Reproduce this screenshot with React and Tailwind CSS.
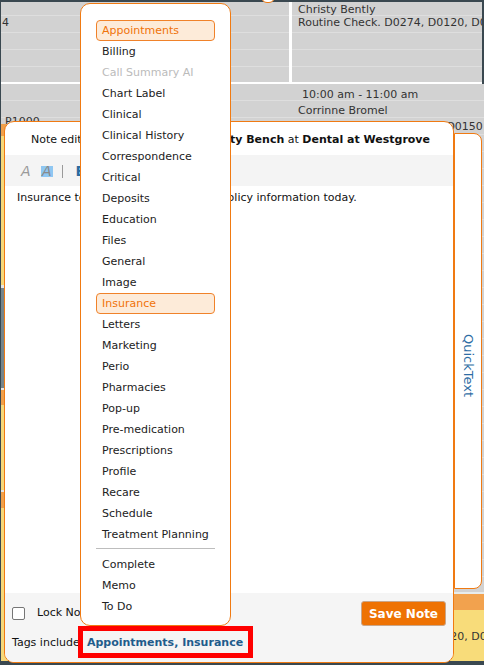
import React from 'react';

const tagOptions = [
  { label: 'Appointments', selected: true },
  { label: 'Billing' },
  { label: 'Call Summary AI', disabled: true },
  { label: 'Chart Label' },
  { label: 'Clinical' },
  { label: 'Clinical History' },
  { label: 'Correspondence' },
  { label: 'Critical' },
  { label: 'Deposits' },
  { label: 'Education' },
  { label: 'Files' },
  { label: 'General' },
  { label: 'Image' },
  { label: 'Insurance', selected: true },
  { label: 'Letters' },
  { label: 'Marketing' },
  { label: 'Perio' },
  { label: 'Pharmacies' },
  { label: 'Pop-up' },
  { label: 'Pre-medication' },
  { label: 'Prescriptions' },
  { label: 'Profile' },
  { label: 'Recare' },
  { label: 'Schedule' },
  { label: 'Treatment Planning' },
];

const statusOptions = ['Complete', 'Memo', 'To Do'];

function TagItem({ tag }) {
  const base = 'h-[21px] flex items-center pl-[5px] pt-[2px] rounded-[4px] border whitespace-nowrap';
  if (tag.selected) {
    return <div className={`${base} bg-[#fdebd9] border-[#f0822a] text-[#f0730a]`}>{tag.label}</div>;
  }
  return (
    <div className={`${base} border-transparent ${tag.disabled ? 'text-[#bbbbbb]' : 'text-[#222]'}`}>{tag.label}</div>
  );
}

function Calendar() {
  const topLines = 'bg-[repeating-linear-gradient(to_bottom,#d2d2d2_0px,#d2d2d2_13px,#dedede_13px,#dedede_14px,#d2d2d2_14px,#d2d2d2_17px)]';
  const lowLines = 'bg-[repeating-linear-gradient(to_bottom,#d2d2d2_0px,#d2d2d2_16px,#dedede_16px,#dedede_17px)]';
  return (
    <div className="h-full flex flex-col bg-[#d2d2d2] text-[11px] leading-[13px] text-[#333]">
      {/* 9 am hour */}
      <div className={`h-[80px] grid grid-cols-[288px_3px_1fr] ${topLines}`}>
        <div className="pt-[14px] pl-[1px] whitespace-nowrap overflow-hidden">4</div>
        <div className="bg-white" />
        <div className="pt-[1px] pl-[6px] whitespace-nowrap overflow-hidden">
          <div>Christy Bently</div>
          <div>Routine Check. D0274, D0120, D0140</div>
        </div>
      </div>
      <div className="h-[2px] bg-white" />
      {/* 10 am hour */}
      <div className="flex-1 grid grid-cols-[288px_3px_1fr]">
        <div className="flex flex-col">
          <div className={`h-[40px] pt-[31px] pl-[4px] ${lowLines}`}>P1000</div>
          <div className="h-[12px] bg-[#f0a04b]" />
          <div className="h-[149px] bg-[#f6d87a]" />
          <div className="h-[3px] bg-[#e6e6e6]" />
          <div className="h-[100px] bg-[#76868c]" />
          <div className="h-[2px] bg-[#e6e6e6]" />
          <div className="h-[15px] bg-[#f0a04b]" />
          <div className="h-[85px] bg-[#f6d87a]" />
          <div className="h-[2px] bg-[#e6e6e6]" />
          <div className="h-[16px] bg-[#f0a04b]" />
          <div className="flex-1 bg-[#f6d87a]" />
        </div>
        <div className={lowLines} />
        <div className="flex flex-col">
          <div className={`h-[508px] pt-[3px] pl-[6px] leading-[16px] whitespace-nowrap overflow-hidden ${lowLines}`}>
            <div className="pl-[4px]">10:00 am - 11:00 am</div>
            <div>Corrinne Bromel</div>
            <div>New Patient Adult. D1110, D0150</div>
          </div>
          <div className="h-[2px] bg-[#e8ecec]" />
          <div className="h-[16px] bg-[#f2a24e]" />
          <div className="flex-1 bg-[#f8dc7a] pl-[6px] pt-[3px] leading-[16px] whitespace-nowrap overflow-hidden">
            <div>Christy Bently</div>
            <div>Routine Check. D0274, D0120, D0140</div>
          </div>
        </div>
      </div>
    </div>
  );
}

export default function App() {
  return (
    <div className="relative w-[484px] h-[665px] overflow-hidden bg-[#3a4850] pt-[2px] pl-[1px] pr-[2px] pb-[4px] font-['DejaVu_Sans',Verdana,sans-serif]">
      <Calendar />

      <div className="absolute left-[261px] top-[-9px] w-[14px] h-[12px] rounded-full border border-[#f07a12] bg-white" />

      {/* note editor */}
      <div className="absolute left-[4px] top-[121px] w-[450px] h-[542px] rounded-[10px] border-[1.5px] border-[#f07a12] bg-white overflow-hidden flex flex-col text-[11px] text-[#111]">
        <div className="h-[33px] flex items-center pt-[3px] pl-[26px] whitespace-nowrap">
          Note editing forms for patient&nbsp;<b>Christy Bench</b>&nbsp;at&nbsp;<b>Dental at Westgrove</b>
        </div>
        <div className="h-[31px] bg-[#f4f4f4] flex items-center pt-[2px] pl-[16px] text-[14px]">
          <span className="italic text-[#9a9a9a] w-[10px]">A</span>
          <span className="ml-[10px] italic text-[#8a8a8a] bg-[#8fc7f2] px-[1px] leading-[11px]">A</span>
          <span className="ml-[9px] w-px h-[13px] bg-[#9a9a9a]" />
          <span className="ml-[13px] font-bold text-[#2a6aa0]">B</span>
        </div>
        <div className="flex-1 pl-[12px] pt-[5px] leading-[13px] whitespace-nowrap">
          Insurance team verified all updated&nbsp; policy information today.
        </div>
        <div className="h-[69px] bg-[#f5f5f5] flex flex-col px-[7px] pt-[8px]">
          <div className="h-[25px] flex items-center justify-between">
            <div className="flex items-center">
              <span className="w-[13px] h-[13px] bg-white border border-[#767676] rounded-[2px]" />
              <span className="ml-[12px]">Lock Note</span>
            </div>
            <button className="w-[85px] h-[25px] bg-[#ee7203] border border-[#c9a68a] rounded-[3px] text-white font-bold text-[12px]">
              Save Note
            </button>
          </div>
          <div className="mt-[10px] leading-[13px] whitespace-nowrap">
            Tags include: <b className="text-[#1f5c8c]">Appointments, Insurance</b>
          </div>
        </div>
      </div>

      {/* quick text tab */}
      <div className="absolute left-[454px] top-[133px] w-[28px] h-[456px] rounded-r-[8px] border border-[#f07a12] bg-white flex items-center justify-center">
        <span className="[writing-mode:vertical-rl] text-[13px] text-[#2e6da4] mt-[10px]">QuickText</span>
      </div>

      {/* tag dropdown */}
      <div className="absolute left-[80px] top-[3px] w-[151px] h-[623px] rounded-[10px] border border-[#f07a12] bg-white pt-[16px] px-[15px] text-[11px]">
        {tagOptions.map((t) => (
          <TagItem key={t.label} tag={t} />
        ))}
        <div className="mt-[3px] mb-[5px] h-px bg-[#bdbdbd]" />
        {statusOptions.map((s) => (
          <TagItem key={s} tag={{ label: s }} />
        ))}
      </div>

      {/* highlight */}
      <div className="absolute left-[78px] top-[626px] w-[175px] h-[32px] border-[5px] border-[#ff0000]" />
    </div>
  );
}
